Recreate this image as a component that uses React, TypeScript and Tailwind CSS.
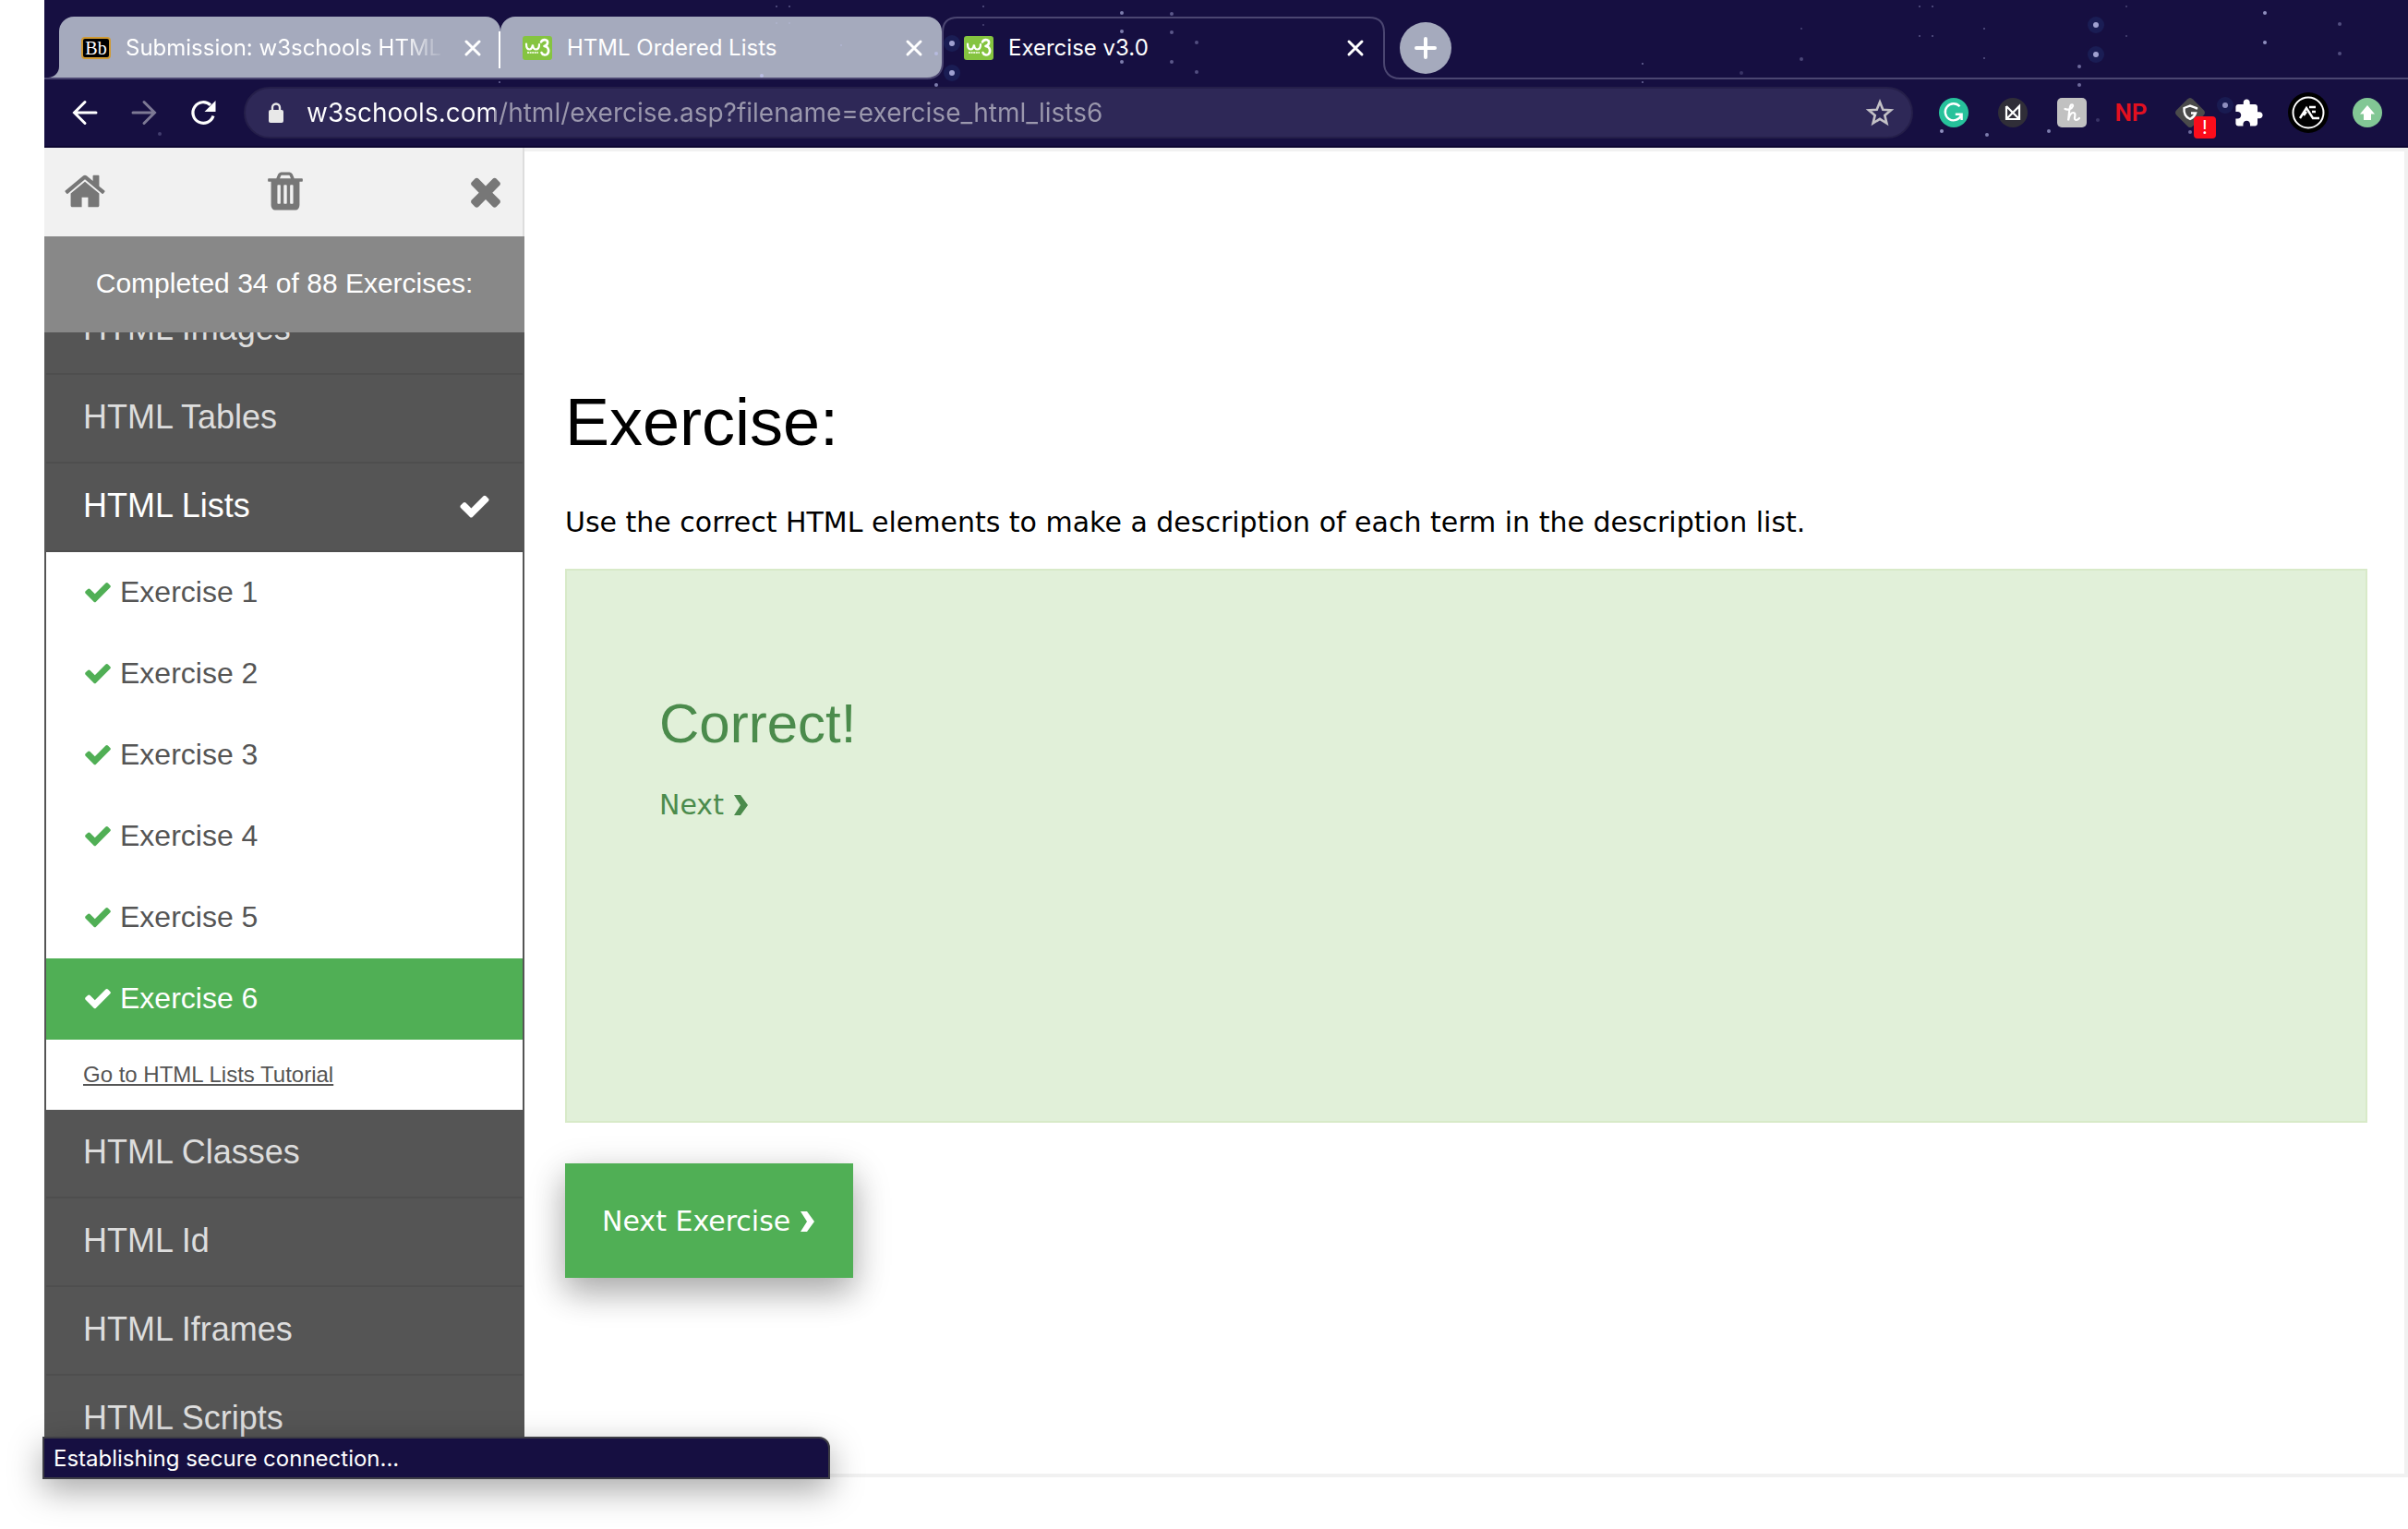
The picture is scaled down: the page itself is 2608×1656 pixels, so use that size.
import React from "react";

const CHECK =
  "M1671 566q0 40-28 68l-724 724-136 136q-28 28-68 28t-68-28l-136-136-362-362q-28-28-28-68t28-68l136-136q28-28 68-28t68 28l294 295 656-657q28-28 68-28t68 28l136 136q28 28 28 68z";
const HOME =
  "M1472 992v480q0 26-19 45t-45 19h-384v-384h-256v384h-384q-26 0-45-19t-19-45v-480q0-1 .5-3t.5-3l575-474 575 474q1 2 1 6zm223-69l-62 74q-8 9-21 11h-3q-13 0-21-7l-692-577-692 577q-12 8-24 7-13-2-21-11l-62-74q-8-10-7-23.5t11-21.5l719-599q32-26 76-26t76 26l244 204v-195q0-14 9-23t23-9h192q14 0 23 9t9 23v408l219 182q10 8 11 21.5t-7 23.5z";
const TRASH =
  "M704 1376v-704q0-14-9-23t-23-9h-64q-14 0-23 9t-9 23v704q0 14 9 23t23 9h64q14 0 23-9t9-23zm256 0v-704q0-14-9-23t-23-9h-64q-14 0-23 9t-9 23v704q0 14 9 23t23 9h64q14 0 23-9t9-23zm256 0v-704q0-14-9-23t-23-9h-64q-14 0-23 9t-9 23v704q0 14 9 23t23 9h64q14 0 23-9t9-23zm-544-992h448l-48-117q-7-9-17-11h-317q-10 2-17 11zm928 32v64q0 14-9 23t-23 9h-96v948q0 83-47 143.5t-113 60.5h-832q-66 0-113-58.5t-47-141.5v-952h-96q-14 0-23-9t-9-23v-64q0-14 9-23t23-9h309l70-167q15-37 54-63t79-26h320q40 0 79 26t54 63l70 167h309q14 0 23 9t9 23z";
const TIMES =
  "M1490 1322q0 40-28 68l-136 136q-28 28-68 28t-68-28l-294-294-294 294q-28 28-68 28t-68-28l-136-136q-28-28-28-68t28-68l294-294-294-294q-28-28-28-68t28-68l136-136q28-28 68-28t68 28l294 294 294-294q28-28 68-28t68 28l136 136q28 28 28 68t-28 68l-294 294 294 294q28 28 28 68z";

function Glyph({ d, className }: { d: string; className: string }) {
  return (
    <svg viewBox="0 0 1792 1792" className={className} fill="currentColor" aria-hidden="true">
      <path d={d} />
    </svg>
  );
}

// Star field of the browser theme: x, y, radius, opacity
const STARS: [number, number, number, number][] = [
  [983, 47, 3, 0.8], [983, 79, 3, 0.8], [966, 58, 2, 0.6], [966, 92, 2, 0.6],
  [1167, 14, 2, 0.6], [1167, 34, 2, 0.6], [1167, 67, 2, 0.6],
  [1221, 15, 2, 0.4], [1221, 35, 2, 0.4], [1221, 67, 2, 0.4],
  [1248, 46, 2, 0.35], [1248, 78, 2, 0.35],
  [793, 7, 1, 0.4], [807, 7, 1, 0.4], [793, 25, 1, 0.3], [807, 25, 1, 0.3],
  [863, 49, 1, 0.4], [777, 82, 2, 0.7], [1017, 7, 1, 0.4], [1017, 27, 1, 0.3],
  [1731, 69, 1, 0.5], [1731, 89, 1, 0.5], [1838, 79, 2, 0.2],
  [1903, 31, 1, 0.3], [1903, 64, 2, 0.3],
  [2222, 27, 3, 0.8], [2222, 59, 3, 0.8], [2204, 72, 2, 0.5], [2204, 92, 2, 0.5],
  [2405, 14, 2, 0.7], [2405, 46, 2, 0.7], [2486, 26, 2, 0.35], [2486, 58, 2, 0.35],
  [2031, 7, 1, 0.4], [2045, 7, 1, 0.4], [2031, 39, 1, 0.4], [2045, 39, 1, 0.4],
  [2101, 31, 1, 0.4], [2101, 63, 1, 0.4], [2255, 7, 1, 0.3], [2255, 39, 1, 0.3],
  [2362, 114, 3, 0.7], [2055, 142, 2, 0.7], [2104, 146, 2, 0.6], [2171, 142, 2, 0.6],
  [2224, 130, 2, 0.2], [2324, 143, 2, 0.5], [493, 89, 1, 0.5], [125, 145, 2, 0.25],
];

function Stars() {
  return (
    <svg className="pointer-events-none absolute inset-0 z-20 h-full w-full" aria-hidden="true">
      {STARS.map(([x, y, r, o], i) => (
        <g key={i} opacity={o}>
          {r > 2 && <circle cx={x} cy={y} r="9" fill="#2a56a0" opacity="0.25" />}
          <circle cx={x} cy={y} r={r} fill="#c3c6f5" />
        </g>
      ))}
    </svg>
  );
}

function BlackboardIcon() {
  return (
    <span className="flex h-6 w-8 shrink-0 items-center justify-center rounded-sm border-2 border-[#d09a33] bg-black font-['Liberation_Serif',serif] text-[20px] leading-5 text-white">
      Bb
    </span>
  );
}

function W3Icon() {
  return (
    <svg viewBox="0 0 32 26" className="h-[26px] w-8 shrink-0" aria-hidden="true">
      <rect width="32" height="26" rx="3" fill="#85c440" />
      <path d="M4 8.5c0 3.500 1 6 3.500 6s3-2.500 3.500-5c.2 3 1.500 5 3.500 5s3.500-2 3.500-5.500" fill="none" stroke="#fff" strokeWidth="2.200" strokeLinecap="round" />
      <path d="M20 6.500c1-2 3-2.700 5-2.200 3 .8 3 5.400-1.500 6.700 5 .4 5.800 6 3 8.700-2 1.500-5 .8-6-1.700" fill="none" stroke="#fff" strokeWidth="2.600" strokeLinecap="round" strokeLinejoin="round" />
      <path d="M5 18h12" stroke="#e7f4d6" strokeWidth="2" strokeDasharray="2 .6" />
    </svg>
  );
}

function CloseTab({ label }: { label: string }) {
  return (
    <button aria-label={`Close ${label}`} className="shrink-0 text-white">
      <svg viewBox="0 0 20 20" className="size-5" fill="none" stroke="currentColor" strokeWidth="3" strokeLinecap="round" aria-hidden="true">
        <path d="M3 3l14 14M17 3L3 17" />
      </svg>
    </button>
  );
}

function Tab({ title, icon, fade }: { title: string; icon: React.ReactNode; fade?: boolean }) {
  return (
    <div className="flex h-[66px] w-[478px] items-center gap-4 rounded-t-2xl bg-[#a5aabd] pl-6 pr-5 pt-0.5">
      {icon}
      <span
        className={
          fade
            ? "min-w-0 flex-1 overflow-hidden whitespace-nowrap [mask-image:linear-gradient(to_right,black_300px,transparent_345px)]"
            : "flex-1 whitespace-nowrap"
        }
      >
        {title}
      </span>
      <CloseTab label={title} />
    </div>
  );
}

function TabStrip() {
  return (
    <div className="flex h-[86px] items-end text-[24px] leading-8 text-white">
      <div className="flex border-b-2 border-[#4b4671] pl-4">
        <div className="relative">
          <svg viewBox="0 0 16 16" className="absolute bottom-0 -left-3 size-3" aria-hidden="true">
            <path d="M16 0v16H0C9 16 16 9 16 0z" fill="#a5aabd" />
          </svg>
          <Tab title="Submission: w3schools HTML" icon={<BlackboardIcon />} fade />
          <span className="absolute right-0 top-4 h-10 w-0.5 bg-white" />
        </div>
        <Tab title="HTML Ordered Lists" icon={<W3Icon />} />
      </div>
      <div className="relative z-10 flex h-[68px] w-[480px] items-center gap-4 pl-6 pr-[22px]">
        <svg viewBox="0 0 512 68" className="absolute bottom-0 -left-4 h-[68px] w-[512px]" aria-hidden="true">
          <path d="M0 68V67C11 67 17 60 17 50V17Q17 1 33 1H479Q495 1 495 17V50C495 60 501 67 512 67V68z" fill="#160f41" />
          <path d="M0 67C11 67 17 60 17 50V17Q17 1 33 1H479Q495 1 495 17V50C495 60 501 67 512 67" fill="none" stroke="#4b4671" strokeWidth="2" />
        </svg>
        <div className="relative flex flex-1 items-center gap-4">
          <W3Icon />
          <span className="flex-1">Exercise v3.0</span>
          <CloseTab label="Exercise v3.0" />
        </div>
      </div>
      <div className="flex h-[68px] flex-1 items-start border-b-2 border-[#4b4671] pl-4 pt-1.5">
        <button aria-label="New tab" className="flex size-14 items-center justify-center rounded-full bg-[#a5aabd]">
          <svg viewBox="0 0 24 24" className="size-6" stroke="#fff" strokeWidth="4" strokeLinecap="round" aria-hidden="true">
            <path d="M12 2v20M2 12h20" />
          </svg>
        </button>
      </div>
    </div>
  );
}

function Toolbar() {
  return (
    <div className="flex h-[74px] items-center border-b-2 border-[#0c0630] px-7 text-white">
      <div className="flex gap-8">
        <button aria-label="Back">
          <svg viewBox="0 0 32 32" className="size-8" fill="none" stroke="#fff" strokeWidth="3" strokeLinecap="round" aria-hidden="true">
            <path d="M28 16H5M16 4.500L4.500 16 16 27.500" />
          </svg>
        </button>
        <button aria-label="Forward">
          <svg viewBox="0 0 32 32" className="size-8" fill="none" stroke="#7d7994" strokeWidth="3" strokeLinecap="round" aria-hidden="true">
            <path d="M4 16h23M16 4.500L27.500 16 16 27.500" />
          </svg>
        </button>
        <button aria-label="Reload">
          <svg viewBox="0 0 32 32" className="size-8" aria-hidden="true">
            <path d="M27 19.500A11.300 11.300 0 1 1 24 7.800" fill="none" stroke="#fff" strokeWidth="3.200" />
            <path d="M29.500 3v12h-12z" fill="#fff" />
          </svg>
        </button>
      </div>
      <label className="mx-7 flex h-14 flex-1 items-center rounded-full border-2 border-[#251f4a] bg-[#2e2857] pl-6 pr-[18px]">
        <svg viewBox="0 0 18 24" className="mr-6 h-6 w-[18px] shrink-0" aria-hidden="true">
          <rect x="1" y="9" width="16" height="14" rx="2" fill="#e8e8e8" />
          <path d="M5 10V6.500a4 4 0 0 1 8 0V10" fill="none" stroke="#e8e8e8" strokeWidth="2.400" />
        </svg>
        <input
          aria-label="Address"
          defaultValue="w3schools.com/html/exercise.asp?filename=exercise_html_lists6"
          className="min-w-0 flex-1 bg-[linear-gradient(to_right,#ffffff_204px,#9b98ad_204px)] bg-clip-text text-[28px] leading-10 text-transparent outline-none"
        />
        <button aria-label="Bookmark this page">
          <svg viewBox="0 0 32 32" className="size-8" fill="none" stroke="#c3c1c6" strokeWidth="2.600" aria-hidden="true">
            <path d="M16 4.500l3.300 8.200 8.700.6-6.700 5.600 2.100 8.600-7.400-4.700-7.400 4.700 2.100-8.600L4 13.300l8.700-.6z" />
          </svg>
        </button>
      </label>
      <div className="flex items-center gap-8">
        <button aria-label="Grammar checker">
          <svg viewBox="0 0 32 32" className="size-8" aria-hidden="true">
            <circle cx="16" cy="16" r="16" fill="#27c29b" />
            <path d="M22.500 9.300A9 9 0 1 0 24 19M24.600 24v-6.200h-6.800" fill="none" stroke="#fff" strokeWidth="2.400" />
          </svg>
        </button>
        <button aria-label="Mail tracker">
          <svg viewBox="0 0 32 32" className="size-8" aria-hidden="true">
            <circle cx="16" cy="16" r="16" fill="#302e38" />
            <path d="M9 9v14h14V9L9 23M9 9l14 14" fill="none" stroke="#fff" strokeWidth="2.200" />
          </svg>
        </button>
        <button aria-label="Coupon finder">
          <svg viewBox="0 0 32 32" className="size-8" aria-hidden="true">
            <rect width="32" height="32" rx="5" fill="#c1c1c1" />
            <path d="M8.500 12c3 1.500 7.500 0 8.500-3 .5-2-2-2.500-2.800 0C12.700 13.500 13 19 12 24.500c1-5 3-8.500 5.500-8.500s2 3 1.500 5.500c-.5 3 2.500 3.500 5 .5" fill="none" stroke="#fff" strokeWidth="2.200" strokeLinecap="round" />
          </svg>
        </button>
        <button aria-label="Net preview" className="flex size-8 items-center justify-center text-[26px] leading-8 font-semibold text-[#e3101f] font-[Roboto,sans-serif]">
          NP
        </button>
        <button aria-label="Privacy shield, 1 alert" className="relative">
          <svg viewBox="0 0 32 32" className="size-8" aria-hidden="true">
            <path d="M13 1.500q3-3 6 0L30.500 13q3 3 0 6L19 30.500q-3 3-6 0L1.500 19q-3-3 0-6z" fill="#4b4b4b" />
            <path d="M23 12.500V11l-7-2.500L9.500 11c-.5 6 2 10 6.500 12 3-1.500 5-3.500 6-6.500h-5" fill="none" stroke="#fff" strokeWidth="2.400" />
          </svg>
          <span className="absolute -bottom-3 -right-3 flex size-6 items-center justify-center rounded-sm bg-[#fb0d1b] text-[20px] leading-6">!</span>
        </button>
        <button aria-label="Extensions">
          <svg viewBox="1 0 23 23" className="size-8" fill="#fff" aria-hidden="true">
            <path d="M20.500 11H19V7c0-1.100-.9-2-2-2h-4V3.500C13 2.120 11.880 1 10.500 1S8 2.120 8 3.500V5H4c-1.100 0-1.990.9-1.990 2v3.800H3.500c1.490 0 2.700 1.210 2.700 2.700s-1.210 2.700-2.700 2.700H2V20c0 1.100.9 2 2 2h3.800v-1.500c0-1.490 1.210-2.700 2.700-2.700 1.490 0 2.700 1.210 2.700 2.700V22H17c1.100 0 2-.9 2-2v-4h1.500c1.380 0 2.500-1.120 2.500-2.500S21.880 11 20.500 11z" />
          </svg>
        </button>
        <button aria-label="Profile" className="-mx-1.5">
          <svg viewBox="0 0 44 44" className="size-11" fill="none" stroke="#fff" aria-hidden="true">
            <circle cx="22" cy="22" r="22" fill="#000" stroke="none" />
            <circle cx="22" cy="22" r="16.500" strokeWidth="2" />
            <path d="M13 28l7-11 7 11h7M17 25l3-4M23 16h7M26 21h4" strokeWidth="2.400" />
          </svg>
        </button>
        <button aria-label="Update browser">
          <svg viewBox="0 0 32 32" className="size-8" aria-hidden="true">
            <circle cx="16" cy="16" r="16" fill="#82c795" />
            <path d="M16 8l8 9.500h-4V24h-8v-6.500H8z" fill="#fff" />
          </svg>
        </button>
      </div>
    </div>
  );
}

function Topic({ name, open }: { name: string; open?: boolean }) {
  return (
    <button
      className={
        "flex w-full items-center justify-between border-b-2 border-[#4e4e4e] pb-[23px] pl-10 pr-[34px] pt-[21px] text-[36px] leading-[50px] " +
        (open ? "text-white" : "text-[#dddddd]")
      }
    >
      {name}
      {open && <Glyph d={CHECK} className="size-9" />}
    </button>
  );
}

function Exercise({ n, active }: { n: number; active?: boolean }) {
  return (
    <a
      href={`#exercise-${n}`}
      className={
        "flex items-center gap-2 px-10 pb-[23px] pt-[21px] text-[32px] leading-[44px] " +
        (active ? "bg-[#50af55] text-white" : "bg-white text-[#555555]")
      }
    >
      <Glyph d={CHECK} className={active ? "size-8 text-white" : "size-8 text-[#50af55]"} />
      Exercise {n}
    </a>
  );
}

function Sidebar() {
  return (
    <aside className="flex w-[520px] shrink-0 flex-col font-['Liberation_Sans',Arial,sans-serif]">
      <div className="flex h-24 shrink-0 items-center justify-between border-r-2 border-[#dddddd] bg-[#f1f1f1] pb-0.5 pl-5 pr-4 text-[#777777]">
        <button aria-label="Home"><Glyph d={HOME} className="size-12" /></button>
        <button aria-label="Delete progress"><Glyph d={TRASH} className="size-12" /></button>
        <button aria-label="Close menu"><Glyph d={TIMES} className="size-12" /></button>
      </div>
      <p className="flex h-[104px] shrink-0 items-center justify-center bg-[#888888] pb-0.5 text-[30px] leading-[44px] text-white">
        Completed 34 of 88 Exercises:
      </p>
      <nav className="flex-1 overflow-hidden border-x-2 border-[#555555] bg-[#555555]">
        <div className="-mt-[50px]">
          <Topic name="HTML Images" />
          <Topic name="HTML Tables" />
          <Topic name="HTML Lists" open />
          {[1, 2, 3, 4, 5, 6].map((n) => (
            <Exercise key={n} n={n} active={n === 6} />
          ))}
          <div className="bg-white px-10 py-5 text-[24px] leading-9 text-[#555555]">
            <a href="#lists-tutorial" className="underline">Go to HTML Lists Tutorial</a>
          </div>
          <Topic name="HTML Classes" />
          <Topic name="HTML Id" />
          <Topic name="HTML Iframes" />
          <Topic name="HTML Scripts" />
        </div>
      </nav>
    </aside>
  );
}

function Chevron() {
  return (
    <svg viewBox="0 0 18 22" className="h-[22px] w-[18px]" fill="currentColor" aria-hidden="true">
      <path d="M1 0h7l8 11-8 11H1l7-11z" />
    </svg>
  );
}

function Content() {
  return (
    <main className="flex-1 border-y-4 border-r-4 border-[#f1f1f1] bg-white pl-11 pr-10 pt-[248px] font-['DejaVu_Sans',Verdana,sans-serif] text-[30px] leading-[44px] text-black">
      <h1 className="font-['Liberation_Sans',Arial,sans-serif] text-[72px] leading-[90px]">Exercise:</h1>
      <p className="mt-[42px]">
        Use the correct HTML elements to make a description of each term in the description list.
      </p>
      <section className="mt-7 min-h-[600px] border-2 border-[#d8eac8] bg-[#e1f0d9] px-[100px] pt-[126px] text-[#4b8b4c]">
        <h2 className="font-['Liberation_Sans',Arial,sans-serif] text-[60px] leading-[80px]">Correct!</h2>
        <a href="#next" className="mt-[26px] inline-flex items-center gap-2.5">
          Next <Chevron />
        </a>
      </section>
      <button className="mt-11 flex items-center gap-2.5 bg-[#50af55] px-10 pb-[39px] pt-[41px] text-white shadow-[0_16px_32px_0_rgba(0,0,0,0.2),0_12px_40px_0_rgba(0,0,0,0.19)]">
        Next Exercise <Chevron />
      </button>
    </main>
  );
}

export default function App() {
  return (
    <div className="relative flex h-screen flex-col bg-white pb-14 pl-12">
      <header className="relative shrink-0 bg-[#160f41] font-[Inter,sans-serif]">
        <TabStrip />
        <Toolbar />
        <Stars />
      </header>
      <div className="flex min-h-0 flex-1">
        <Sidebar />
        <Content />
      </div>
      <div
        role="status"
        className="absolute bottom-[54px] left-[46px] w-[853px] rounded-tr-xl border-2 border-[#3d3d45] bg-[#160f41] px-2.5 pb-[3px] pt-[5px] font-[Inter,sans-serif] text-[24px] leading-[34px] text-white shadow-[0_12px_36px_0_rgba(0,0,0,0.35)]"
      >
        Establishing secure connection...
      </div>
    </div>
  );
}
